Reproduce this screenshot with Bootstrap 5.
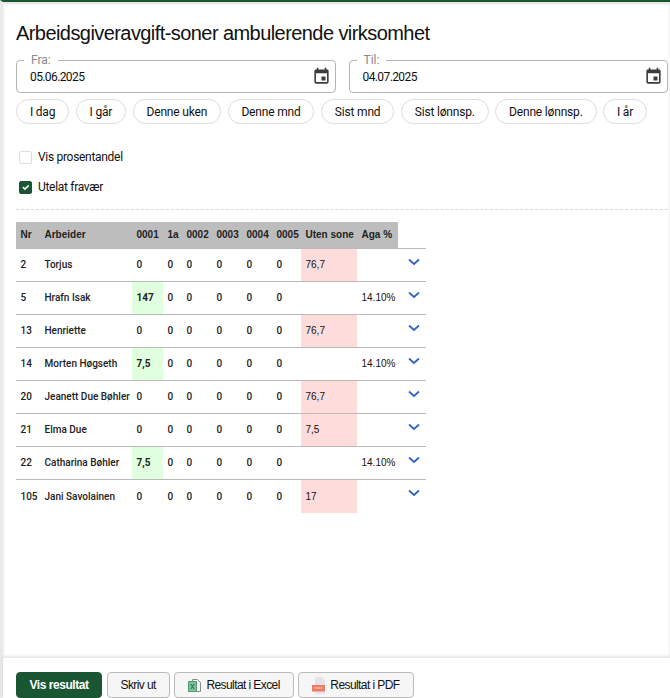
<!DOCTYPE html>
<html lang="no">
<head>
  <meta charset="UTF-8">
  <title>Arbeidsgiveravgift-soner</title>
  <link href="https://cdn.jsdelivr.net/npm/bootstrap@5.3.0/dist/css/bootstrap.min.css" rel="stylesheet">
  <style>
    html, body { height: 100%; overflow: hidden; }
    body { font-family: "Liberation Sans", Arial, sans-serif; color: #111; font-size: 12px; }
    .page-wrap { height: 698px; border-top: 2px solid #1a5632; border-left: 3px solid #e9e9e9; box-shadow: inset 0 2px 3px rgba(0,0,0,.12); }
    .page-main { padding: 18px 2px 0 13px; }
    .page-title { font-size: 20px; font-weight: 400; line-height: 26px; letter-spacing: -.57px; margin: 0 0 14px; }
    .date-row { gap: 13px; }
    .date-box { flex: 1 1 0; height: 33px; border: 1px solid #b4b4b4; border-radius: 4px; padding: 0 0 0 13px; position: relative; font-family: Roboto, sans-serif; letter-spacing: -.6px; }
    .date-label { position: absolute; top: -8px; left: 7px; background: #fff; padding: 0 7px; font-size: 12px; line-height: 14px; color: #888; letter-spacing: 0; }
    .chip-row { gap: 6.5px; margin-top: 6px; }
    .chip { height: 25px; border: 1px solid #ddd; border-radius: 13px; background: #fff; font-family: Roboto, sans-serif; font-size: 12px; letter-spacing: -.18px; line-height: 22px; padding: 0 12.9px; color: #111; }
    .check-list { margin: 18px 0 0 3px; font-family: Roboto, sans-serif; font-size: 12px; letter-spacing: -.3px; }
    .check-line { height: 30px; gap: 6px; }
    .check-line .form-check-input { width: 13px; height: 13px; margin: 0; border-radius: 2px; border-color: #ddd; }
    .check-line .form-check-input:checked { background-color: #1a5632; border-color: #1a5632; }
    .dash-sep { border-top: 1px dashed #d8d8d8; margin: 7px 0 12px; }
    .report-table { font-size: 10px; width: 410px; table-layout: fixed; border-collapse: collapse; margin: 0; color: #222; }
    .report-table th { height: 26px; background: #bdbdbd; padding: 0 0 0 4.5px; border: 0; vertical-align: middle; font-weight: 700; }
    .report-table th.no-fill { background: transparent; }
    .report-table td { height: 33px; padding: 0 0 0 4.5px; border-width: 1px 0 0; border-color: #b9b9b9; vertical-align: middle; font-family: Roboto, sans-serif; font-weight: 500; white-space: nowrap; }
    .report-table tr:last-child td { height: 34px; }
    .report-table td.aga-val, .report-table td.red-val { font-family: "Liberation Sans", Arial, sans-serif; font-weight: 400; color: #111; }
    .report-table td.cell-green { background: #dfffdf; font-weight: 700; }
    .report-table td.cell-red { background: #ffdcdc; }
    .chev-cell svg { display: block; margin: -6px 0 0 5px; }
    .page-foot { height: 40px; position: absolute; left: 0; right: 0; bottom: 0; gap: 4.5px; padding: 14px 0 0 13px; box-shadow: 0 -2px 3px rgba(0,0,0,.1); background: #fff; }
    .act-btn { height: 26px; border: 1px solid #bbb; border-radius: 4px; background: #f6f6f6; font-size: 12px; padding: 0 13px; letter-spacing: -.58px; color: #111; display: flex; align-items: center; gap: 4px; white-space: nowrap; }
    .act-btn.act-main { background: #1a5632; border-color: #1a5632; color: #fff; font-weight: 700; width: 86px; padding: 0; justify-content: center; letter-spacing: -.45px; }
  </style>
</head>
<body>
  <div class="page-wrap position-relative">
    <div class="page-main">
      <h1 class="page-title">Arbeidsgiveravgift-soner ambulerende virksomhet</h1>

      <div class="d-flex date-row">
        <div class="date-box d-flex align-items-center justify-content-between">
          <span class="date-label">Fra:</span>
          <span>05.06.2025</span>
          <svg class="me-1" width="19" height="19" viewBox="0 0 24 24" fill="#3c3c3c"><path d="M17 12h-5v5h5v-5zM16 1v2H8V1H6v2H5c-1.11 0-2 .9-2 2v14c0 1.1.89 2 2 2h14c1.1 0 2-.9 2-2V5c0-1.1-.9-2-2-2h-1V1h-2zm3 18H5V8h14v11z"/></svg>
        </div>
        <div class="date-box d-flex align-items-center justify-content-between">
          <span class="date-label">Til:</span>
          <span>04.07.2025</span>
          <svg class="me-1" width="19" height="19" viewBox="0 0 24 24" fill="#3c3c3c"><path d="M17 12h-5v5h5v-5zM16 1v2H8V1H6v2H5c-1.11 0-2 .9-2 2v14c0 1.1.89 2 2 2h14c1.1 0 2-.9 2-2V5c0-1.1-.9-2-2-2h-1V1h-2zm3 18H5V8h14v11z"/></svg>
        </div>
      </div>

      <div class="d-flex chip-row">
        <button class="chip">I dag</button>
        <button class="chip">I går</button>
        <button class="chip">Denne uken</button>
        <button class="chip">Denne mnd</button>
        <button class="chip">Sist mnd</button>
        <button class="chip">Sist lønnsp.</button>
        <button class="chip">Denne lønnsp.</button>
        <button class="chip">I år</button>
      </div>

      <div class="check-list">
        <label class="check-line d-flex align-items-center"><input class="form-check-input" type="checkbox"> Vis prosentandel</label>
        <label class="check-line d-flex align-items-center"><input class="form-check-input" type="checkbox" checked> Utelat fravær</label>
      </div>

      <div class="dash-sep"></div>

      <table class="table report-table">
        <colgroup>
          <col style="width:24px"><col style="width:92px"><col style="width:31px"><col style="width:19px"><col style="width:30px"><col style="width:30px"><col style="width:30px"><col style="width:29px"><col style="width:56px"><col style="width:41px"><col style="width:28px">
        </colgroup>
        <thead>
          <tr><th>Nr</th><th>Arbeider</th><th>0001</th><th>1a</th><th>0002</th><th>0003</th><th>0004</th><th>0005</th><th>Uten sone</th><th>Aga %</th><th class="no-fill"></th></tr>
        </thead>
        <tbody id="rows"></tbody>
      </table>
    </div>

    <div class="page-foot d-flex">
      <button class="act-btn act-main">Vis resultat</button>
      <button class="act-btn">Skriv ut</button>
      <button class="act-btn">
        <svg width="14" height="15" viewBox="0 0 14 15"><path d="M4.5 1.5h5l3 3v9h-8z" fill="#f7f7f7" stroke="#8a8a8a"/><path d="M.5 3.5h8v10h-8z" fill="#7cc09c" stroke="#4f9a73"/><path d="M2.8 6l3.4 5m0-5l-3.4 5" stroke="#1f6b45" stroke-width="1"/></svg>
        Resultat i Excel
      </button>
      <button class="act-btn">
        <svg width="14" height="17" viewBox="0 0 14 17"><path d="M3 0h7l3 3v14H3z" fill="#e3e3e8"/><path d="M0 8h13v6.5H0z" fill="#ee7b66"/><path d="M2.5 11h8" stroke="#fbd5cf"/></svg>
        Resultat i PDF
      </button>
    </div>
  </div>

  <script>
    const rows = [
      ['2', 'Torjus', '0', '76,7', ''],
      ['5', 'Hrafn Isak', '147', '', '14.10%'],
      ['13', 'Henriette', '0', '76,7', ''],
      ['14', 'Morten Høgseth', '7,5', '', '14.10%'],
      ['20', 'Jeanett Due Bøhler', '0', '76,7', ''],
      ['21', 'Elma Due', '0', '7,5', ''],
      ['22', 'Catharina Bøhler', '7,5', '', '14.10%'],
      ['105', 'Jani Savolainen', '0', '17', '']
    ];
    const chevron = '<svg width="12" height="8" viewBox="0 0 12 8" fill="none" stroke="#2f62c4" stroke-width="1.7"><path d="M1 1.5l5 4.5 5-4.5"/></svg>';
    document.getElementById('rows').innerHTML = rows.map(r => `<tr>
      <td>${r[0]}</td><td>${r[1]}</td>
      <td class="${r[2] !== '0' ? 'cell-green' : ''}">${r[2]}</td>
      <td>0</td><td>0</td><td>0</td><td>0</td><td>0</td>
      <td class="red-val ${r[3] ? 'cell-red' : ''}">${r[3]}</td>
      <td class="aga-val">${r[4]}</td>
      <td class="chev-cell">${chevron}</td>
    </tr>`).join('');
  </script>
  <script src="https://cdn.jsdelivr.net/npm/bootstrap@5.3.0/dist/js/bootstrap.bundle.min.js"></script>
</body>
</html>
